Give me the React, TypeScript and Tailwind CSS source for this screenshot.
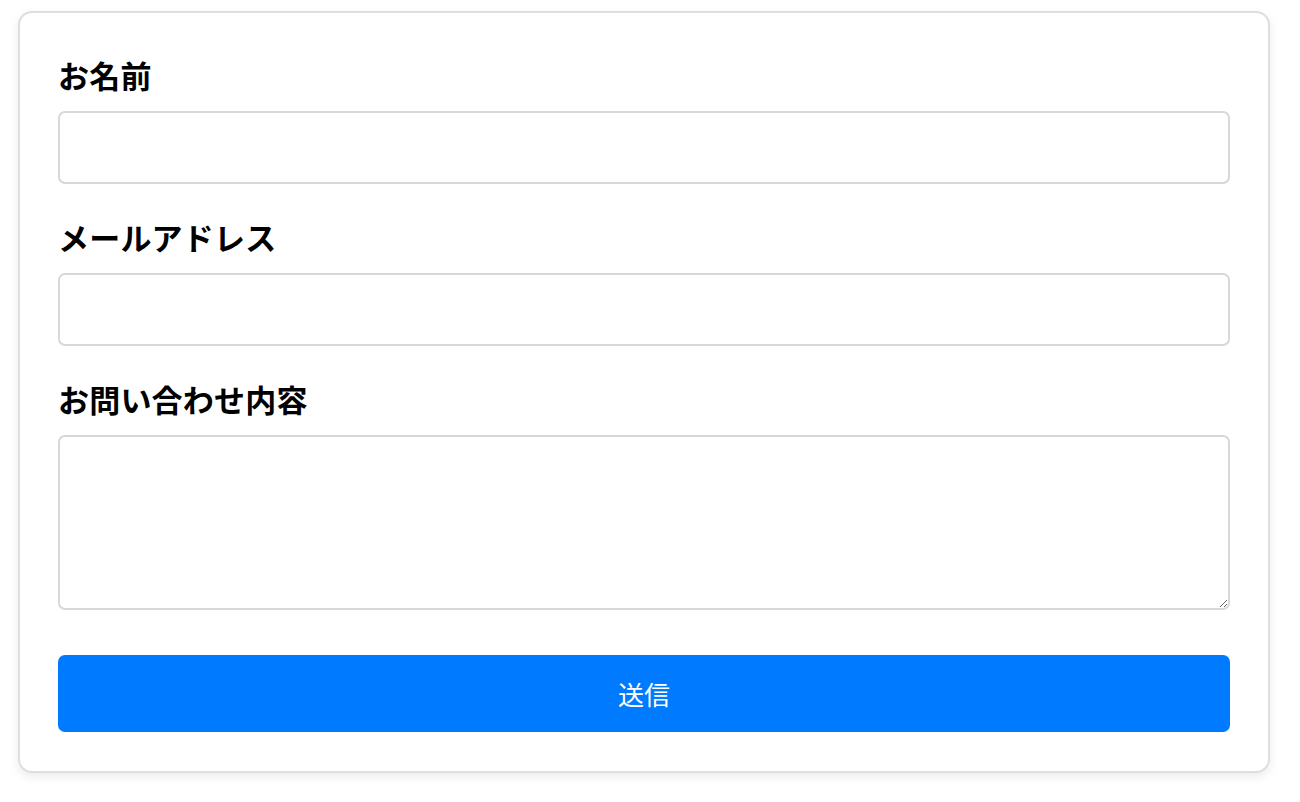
import React from 'react';

const fields = [
  { id: 'name', label: 'お名前', type: 'text' },
  { id: 'email', label: 'メールアドレス', type: 'email' },
] as const;

const labelClass =
  "block text-[31px] leading-[46px] font-bold text-black mb-[13px] tracking-[0.2px] font-['Noto_Sans_CJK_JP','Noto_Sans',sans-serif]";

const App: React.FC = () => {
  return (
    <div className="min-h-screen bg-white pt-[11px] pl-[18px] font-['Noto_Sans_CJK_JP','Noto_Sans',sans-serif]">
      <form
        className="w-[1252px] rounded-[14px] border-2 border-[#dedede] bg-white px-[38px] pt-[39px] pb-[39px] shadow-[0_4px_10px_rgba(0,0,0,0.08)]"
        onSubmit={(e) => e.preventDefault()}
      >
        {fields.map((f, i) => (
          <div key={f.id} className={i > 0 ? 'mt-[30px]' : ''}>
            <label htmlFor={f.id} className={labelClass}>
              {f.label}
            </label>
            <input
              id={f.id}
              type={f.type}
              className="block w-full h-[73px] rounded-[7px] border-2 border-[#d8d8d8] bg-white px-4 text-[26px] outline-none"
            />
          </div>
        ))}

        <div className="mt-[30px]">
          <label htmlFor="message" className={labelClass}>
            お問い合わせ内容
          </label>
          <textarea
            id="message"
            className="block w-full h-[175px] rounded-[7px] border-2 border-[#d8d8d8] bg-white px-4 py-3 text-[26px] outline-none"
          />
        </div>

        <button
          type="submit"
          className="mt-[45px] block w-full h-[77px] rounded-[7px] bg-[#007bff] text-[26px] text-white"
        >
          送信
        </button>
      </form>
    </div>
  );
};

export default App;
